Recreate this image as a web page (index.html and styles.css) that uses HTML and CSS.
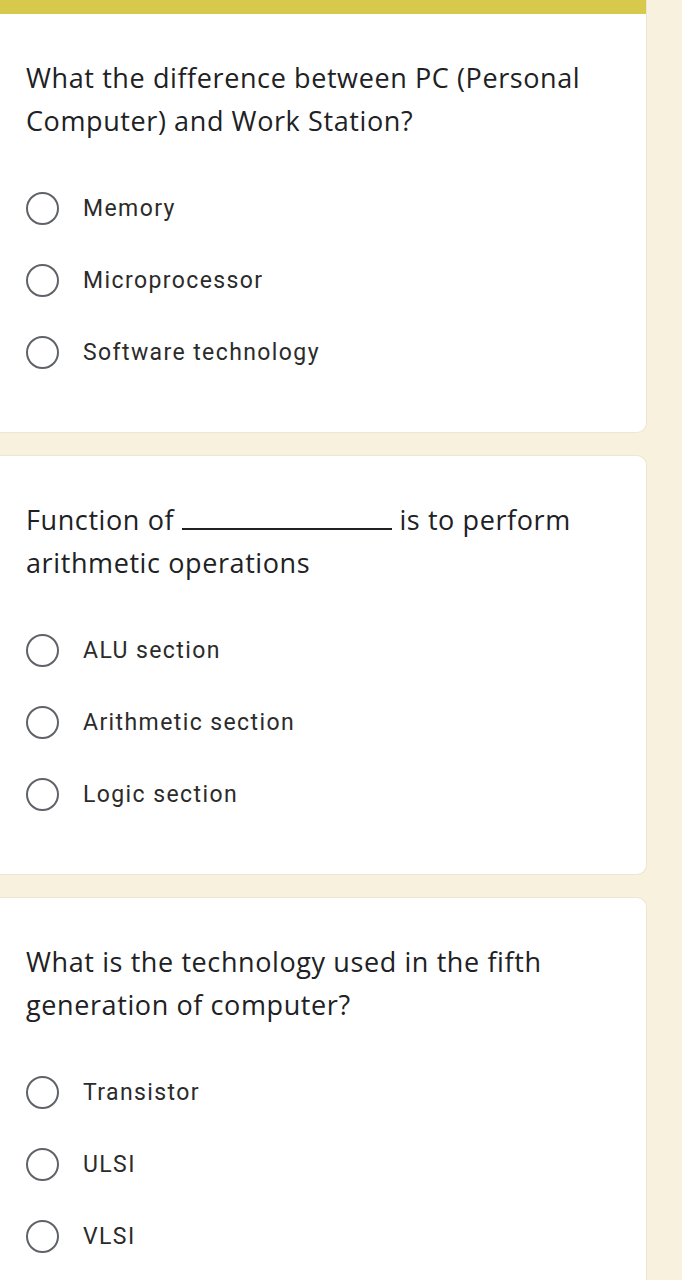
FILE: index.html
```html
<!DOCTYPE html>
<html>
<head>
<meta charset="utf-8">
<link rel="stylesheet" href="styles.css">
</head>
<body>
<div class="page">
  <div class="card first">
    <div class="bar"></div>
    <div class="q">What the difference between PC (Personal Computer) and Work Station?</div>
    <div class="opts">
      <div class="opt"><span class="radio"></span><span class="lbl">Memory</span></div>
      <div class="opt"><span class="radio"></span><span class="lbl">Microprocessor</span></div>
      <div class="opt"><span class="radio"></span><span class="lbl">Software technology</span></div>
    </div>
  </div>
  <div class="card">
    <div class="q">Function of <span class="blank"></span> is to perform arithmetic operations</div>
    <div class="opts">
      <div class="opt"><span class="radio"></span><span class="lbl">ALU section</span></div>
      <div class="opt"><span class="radio"></span><span class="lbl">Arithmetic section</span></div>
      <div class="opt"><span class="radio"></span><span class="lbl">Logic section</span></div>
    </div>
  </div>
  <div class="card">
    <div class="q">What is the technology used in the fifth generation of computer?</div>
    <div class="opts">
      <div class="opt"><span class="radio"></span><span class="lbl">Transistor</span></div>
      <div class="opt"><span class="radio"></span><span class="lbl">ULSI</span></div>
      <div class="opt"><span class="radio"></span><span class="lbl">VLSI</span></div>
    </div>
  </div>
</div>
</body>
</html>
```
FILE: styles.css
```css
html, body {
  margin: 0;
  padding: 0;
  background: #f7f1dd;
}
body {
  width: 682px;
  height: 1280px;
  overflow: hidden;
}
.page {
  display: flex;
  flex-direction: column;
  gap: 24px;
}
.card {
  background: #ffffff;
  margin-left: -10px;
  width: 656px;
  border-radius: 9px;
  box-shadow: 0 0 0 1px #ece6d2;
  padding: 42px 0 44px 36px;
  box-sizing: border-box;
  overflow: hidden;
}
.card.first {
  padding-top: 0;
  border-radius: 0 0 9px 9px;
}
.bar {
  height: 14px;
  background: #d6c94c;
  margin: 0 0 42px -36px;
}
.q {
  font-family: "Open Sans", sans-serif;
  font-size: 27px;
  line-height: 43px;
  color: #202124;
  width: 580px;
  letter-spacing: 0.6px;
}
.blank {
  display: inline-block;
  width: 210px;
  height: 2px;
  background: #202124;
  vertical-align: baseline;
  margin: 0;
}
.opts {
  margin-top: 30px;
  display: flex;
  flex-direction: column;
}
.opt {
  height: 72px;
  display: flex;
  align-items: center;
}
.radio {
  width: 29px;
  height: 29px;
  border: 2.5px solid #5f6368;
  border-radius: 50%;
  margin-left: 0;
  flex: none;
}
.lbl {
  margin-left: 24px;
  font-family: Roboto, sans-serif;
  font-size: 23px;
  letter-spacing: 1.4px;
  color: #2b2b2b;
}
```
